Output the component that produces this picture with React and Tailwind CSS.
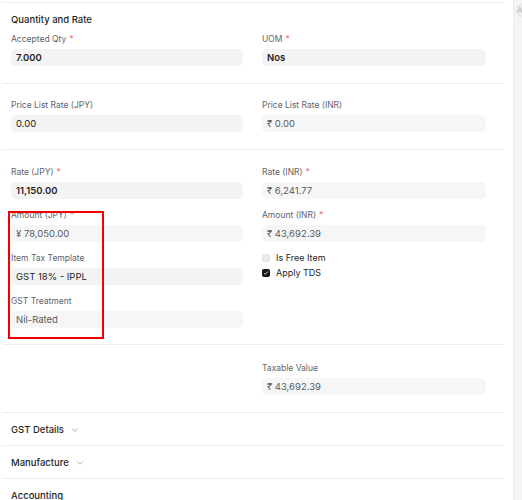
import { ChevronDown } from 'lucide-react'

function Label({ text, req }) {
  return (
    <div className="h-[14px] flex items-center text-[8.5px] text-[#5f6368] mb-[3px] leading-none">
      {text}
      {req && <span className="text-[#f27474] ml-[3px]">*</span>}
    </div>
  )
}

function Field({ label, req, value, bold, readOnly, className = '' }) {
  return (
    <div className={className}>
      <Label text={label} req={req} />
      <div
        className={`h-[17px] rounded-[5px] flex items-center px-[5px] text-[9.5px] leading-none ${
          readOnly ? 'bg-[#f6f6f6] text-[#5a5a5a]' : 'bg-[#f3f3f3] text-[#1f1f1f]'
        } ${bold ? 'font-semibold' : ''}`}
      >
        {value}
      </div>
    </div>
  )
}

function Check({ checked, label }) {
  return (
    <div className="flex items-center h-[15px] gap-[6px] text-[9px] text-[#1f1f1f]">
      {checked ? (
        <span className="w-[8px] h-[8px] rounded-[2px] bg-[#171717] flex items-center justify-center">
          <svg viewBox="0 0 8 8" className="w-[6px] h-[6px]">
            <path d="M1.5 4.2 L3.2 5.8 L6.5 2.2" fill="none" stroke="white" strokeWidth="1.1" />
          </svg>
        </span>
      ) : (
        <span className="w-[8px] h-[8px] rounded-[2px] bg-[#ececec] border border-[#e2e2e2]" />
      )}
      {label}
    </div>
  )
}

function Collapse({ title, chevron = true }) {
  return (
    <div className="border-t border-[#ededed] h-[33px] pt-[2px] flex items-center pl-[9px] text-[9.5px] text-[#1f1f1f] font-medium">
      {title}
      {chevron && <ChevronDown size={10} strokeWidth={1.5} className="ml-[6px] text-[#7c7c7c]" />}
    </div>
  )
}

export default function App() {
  return (
    <div className="w-[522px] h-[500px] overflow-hidden bg-white flex" style={{ fontFamily: 'Inter, "Noto Sans", sans-serif' }}>
      <div className="w-[513px] pt-[2px] relative">
        <div className="ml-[2px] w-[502px]">
          {/* Quantity and Rate */}
          <section className="border-t border-[#ededed] pt-[9px] pb-[17px] pl-[9px]">
            <h3 className="h-[16px] flex items-center text-[9.5px] font-medium text-[#1f1f1f] mb-[4px]">
              Quantity and Rate
            </h3>
            <div className="grid grid-cols-[232px_224px] gap-x-[19px]">
              <Field label="Accepted Qty" req value="7.000" bold />
              <Field label="UOM" req value="Nos" bold />
            </div>
          </section>

          {/* Price list */}
          <section className="border-t border-[#ededed] pt-[14px] pb-[17px] pl-[9px]">
            <div className="grid grid-cols-[232px_224px] gap-x-[19px]">
              <Field label="Price List Rate (JPY)" value="0.00" />
              <Field label="Price List Rate (INR)" value="₹ 0.00" readOnly />
            </div>
          </section>

          {/* Rate */}
          <section className="border-t border-[#ededed] pt-[15px] pb-[16px] pl-[9px]">
            <div className="grid grid-cols-[232px_224px] gap-x-[19px]">
              <div className="flex flex-col gap-[9px]">
                <Field label="Rate (JPY)" req value="11,150.00" bold />
                <Field label="Amount (JPY)" req value="¥ 78,050.00" readOnly />
                <Field label="Item Tax Template" value="GST 18% - IPPL" />
                <Field label="GST Treatment" value="Nil-Rated" readOnly />
              </div>
              <div className="flex flex-col gap-[9px]">
                <Field label="Rate (INR)" req value="₹ 6,241.77" readOnly />
                <Field label="Amount (INR)" req value="₹ 43,692.39" readOnly />
                <div className="-mt-[1px]">
                  <Check label="Is Free Item" />
                  <Check label="Apply TDS" checked />
                </div>
              </div>
            </div>
          </section>

          {/* Taxable value */}
          <section className="border-t border-[#ededed] pt-[16px] pb-[17px] pl-[9px]">
            <div className="grid grid-cols-[232px_224px] gap-x-[19px]">
              <div />
              <Field label="Taxable Value" value="₹ 43,692.39" readOnly />
            </div>
          </section>

          <Collapse title="GST Details" />
          <Collapse title="Manufacture" />
          <Collapse title="Accounting" chevron={false} />
        </div>

        {/* annotation box */}
        <div className="absolute left-[8px] top-[211px] w-[96px] h-[128px] border-2 border-[#f00000] pointer-events-none" />
      </div>

      {/* side strip */}
      <div className="w-[9px] h-full bg-[#f4f4f4] border-l border-[#ececec] relative overflow-hidden">
        <div className="absolute left-[1px] top-[3px] w-[14px] h-[14px] rounded-full bg-[#ebebeb] text-[8px] text-[#b5b5b5] flex items-center pl-[2px]">
          A
        </div>
      </div>
    </div>
  )
}
